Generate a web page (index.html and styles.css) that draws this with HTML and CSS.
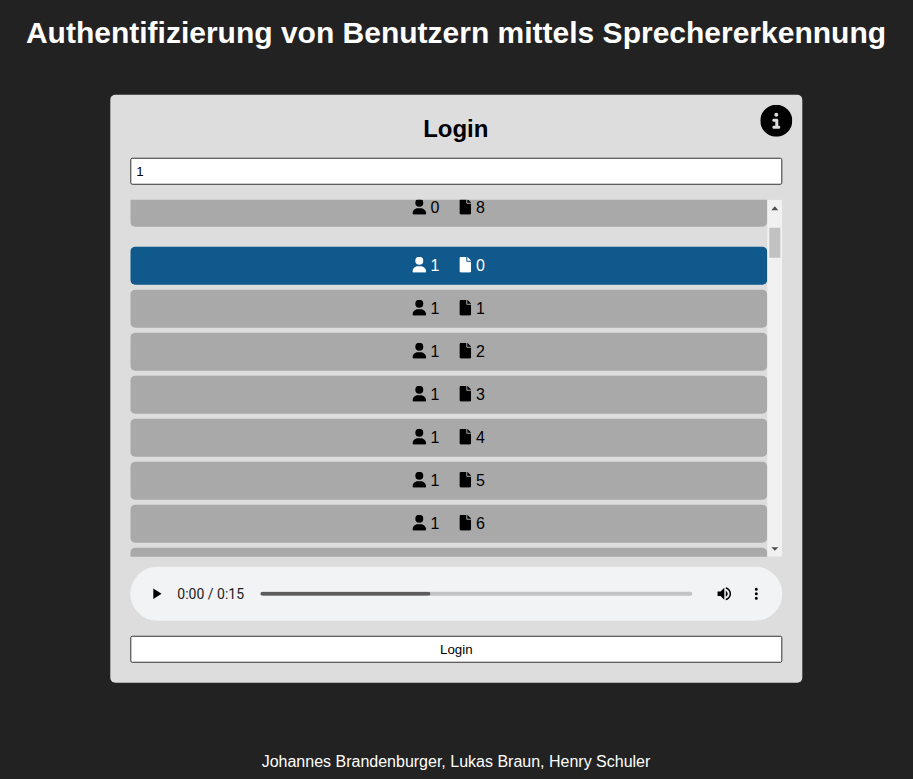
FILE: index.html
```
<!DOCTYPE html>
<html lang="de">
<head>
<meta charset="utf-8">
<title>Login</title>
<link rel="stylesheet" href="styles.css">
</head>
<body>
<svg class="defs" width="0" height="0" aria-hidden="true">
  <symbol id="user" viewBox="0 0 448 512"><path d="M224 256a128 128 0 1 0 0-256 128 128 0 1 0 0 256zm-45.700 48C79.800 304 0 383.800 0 482.300 0 498.700 13.300 512 29.700 512H418.300c16.400 0 29.700-13.300 29.700-29.700 0-98.500-79.800-178.300-178.300-178.300z"/></symbol>
  <symbol id="file" viewBox="0 0 384 512"><path d="M0 64C0 28.700 28.700 0 64 0H224V128c0 17.700 14.300 32 32 32H384V448c0 35.300-28.700 64-64 64H64c-35.300 0-64-28.700-64-64zM384 128H256V0z"/></symbol>
</svg>
<h1 class="title">Authentifizierung von Benutzern mittels Sprechererkennung</h1>
<main class="card">
  <svg class="info" viewBox="0 0 512 512"><path d="M256 512a256 256 0 1 0 0-512 256 256 0 1 0 0 512zm-40-176h24v-64h-24c-13.300 0-24-10.700-24-24s10.700-24 24-24h48c13.300 0 24 10.700 24 24v88h8c13.300 0 24 10.700 24 24s-10.700 24-24 24h-80c-13.300 0-24-10.700-24-24s10.700-24 24-24zm40-208a32 32 0 1 1 0 64 32 32 0 1 1 0-64z"/></svg>
  <h2 class="heading">Login</h2>
  <input class="field" type="text" value="1">
  <div class="scroller">
    <div class="list">
      <div class="item last"><svg class="user"><use href="#user"/></svg><span>0</span><svg class="file"><use href="#file"/></svg><span>8</span></div>
      <div class="item active"><svg class="user"><use href="#user"/></svg><span>1</span><svg class="file"><use href="#file"/></svg><span>0</span></div>
      <div class="item"><svg class="user"><use href="#user"/></svg><span>1</span><svg class="file"><use href="#file"/></svg><span>1</span></div>
      <div class="item"><svg class="user"><use href="#user"/></svg><span>1</span><svg class="file"><use href="#file"/></svg><span>2</span></div>
      <div class="item"><svg class="user"><use href="#user"/></svg><span>1</span><svg class="file"><use href="#file"/></svg><span>3</span></div>
      <div class="item"><svg class="user"><use href="#user"/></svg><span>1</span><svg class="file"><use href="#file"/></svg><span>4</span></div>
      <div class="item"><svg class="user"><use href="#user"/></svg><span>1</span><svg class="file"><use href="#file"/></svg><span>5</span></div>
      <div class="item"><svg class="user"><use href="#user"/></svg><span>1</span><svg class="file"><use href="#file"/></svg><span>6</span></div>
      <div class="item"></div>
    </div>
    <div class="bar">
      <svg class="arrow" viewBox="0 0 15 17"><path d="M4 10.500L7.500 6.500 11 10.500z"/></svg>
      <div class="thumb"></div>
      <svg class="arrow" viewBox="0 0 15 17"><path d="M4 7.500h7L7.500 11z"/></svg>
    </div>
  </div>
  <div class="player">
    <svg class="play" viewBox="0 0 24 24"><path d="M8 5v14l11-7z"/></svg>
    <span class="time">0:00 / 0:15</span>
    <div class="track"><div class="buffered"></div></div>
    <svg class="volume" viewBox="0 0 24 24"><path d="M3 9v6h4l5 5V4L7 9zm13.500 3A4.500 4.500 0 0 0 14 7.970v8.050c1.480-.73 2.500-2.250 2.500-4.020zM14 3.230v2.060c2.890.86 5 3.540 5 6.710s-2.110 5.850-5 6.710v2.060c4.010-.91 7-4.490 7-8.770s-2.990-7.860-7-8.770z"/></svg>
    <svg class="more" viewBox="0 0 24 24"><path d="M12 8a2 2 0 1 0 0-4 2 2 0 0 0 0 4zm0 2a2 2 0 1 0 0 4 2 2 0 0 0 0-4zm0 6a2 2 0 1 0 0 4 2 2 0 0 0 0-4z"/></svg>
  </div>
  <button class="submit">Login</button>
</main>
<footer class="footer">Johannes Brandenburger, Lukas Braun, Henry Schuler</footer>
</body>
</html>
```
FILE: styles.css
```
* { box-sizing: border-box; }
html { background: #222; }
body {
  margin: 0;
  width: 912px;
  height: 779px;
  overflow: hidden;
  display: flex;
  flex-direction: column;
  align-items: center;
  background: #222;
  font-family: "Liberation Sans", Arial, sans-serif;
  font-size: 16px;
}
.defs { position: absolute; }
.title {
  margin: 15px 0 0;
  height: 80px;
  font-size: 30px;
  line-height: 36px;
  color: #fff;
  white-space: nowrap;
}
.card {
  position: relative;
  width: 692px;
  height: 588px;
  padding: 20px;
  background: #ddd;
  border-radius: 5px;
  transform: translate(0.3px, -0.25px);
  display: flex;
  flex-direction: column;
}
.info {
  position: absolute;
  top: 10px;
  right: 10px;
  width: 32px;
  height: 32px;
}
.heading {
  margin: 0 0 15px;
  height: 28px;
  font-size: 24px;
  line-height: 28px;
  text-align: center;
  text-indent: -1px;
}
.field, .submit {
  display: block;
  width: 100%;
  height: 27px;
  flex: none;
  border: 1px solid #333;
  border-radius: 2px;
  background: #fff;
  color: #000;
  font: 13.333px "Liberation Sans", Arial, sans-serif;
}
.field { padding: 0 5px; margin-bottom: 15px; }
.submit { padding: 0; }
.scroller {
  display: flex;
  height: 357px;
  flex: none;
  overflow: hidden;
  margin-bottom: 10px;
}
.list {
  flex: 1;
  display: flex;
  flex-direction: column;
  gap: 5px;
  margin-top: -11px;
}
.item {
  height: 38px;
  flex: none;
  display: flex;
  align-items: center;
  justify-content: center;
  gap: 4px;
  border-radius: 5px;
  background: #a9a9a9;
}
.item.last { margin-bottom: 15px; }
.item.active { background: #0f598c; color: #fff; }
.item svg { height: 16px; margin-bottom: 2px; fill: currentColor; }
.item .user { width: 14px; }
.item .file { width: 12px; margin-left: 16px; margin-right: 0.6px; }
.bar {
  width: 15px;
  height: 357px;
  display: flex;
  flex-direction: column;
  align-items: center;
  background: #f1f1f1;
}
.arrow { width: 15px; height: 17px; fill: #505050; }
.thumb {
  width: 11px;
  height: 30px;
  margin: 11px 0 auto;
  background: #c1c1c1;
}
.player {
  display: flex;
  align-items: center;
  height: 54px;
  flex: none;
  margin-bottom: 15px;
  padding: 0 17px;
  border-radius: 27px;
  background: #f1f3f4;
}
.player svg { width: 18px; height: 18px; flex: none; }
.time {
  width: 67px;
  margin: 0 16px 0 12px;
  font: 14px Roboto, sans-serif;
  color: #202124;
  white-space: nowrap;
}
.track {
  flex: 1;
  height: 4px;
  border-radius: 2px;
  background: #c2c3c4;
  overflow: hidden;
}
.buffered { width: 170px; height: 4px; border-radius: 2px; background: #5b5b5c; }
.player .volume { margin: 0 14px 0 23px; }
.footer {
  margin-top: 70px;
  line-height: 18px;
  color: #fff;
}
```
